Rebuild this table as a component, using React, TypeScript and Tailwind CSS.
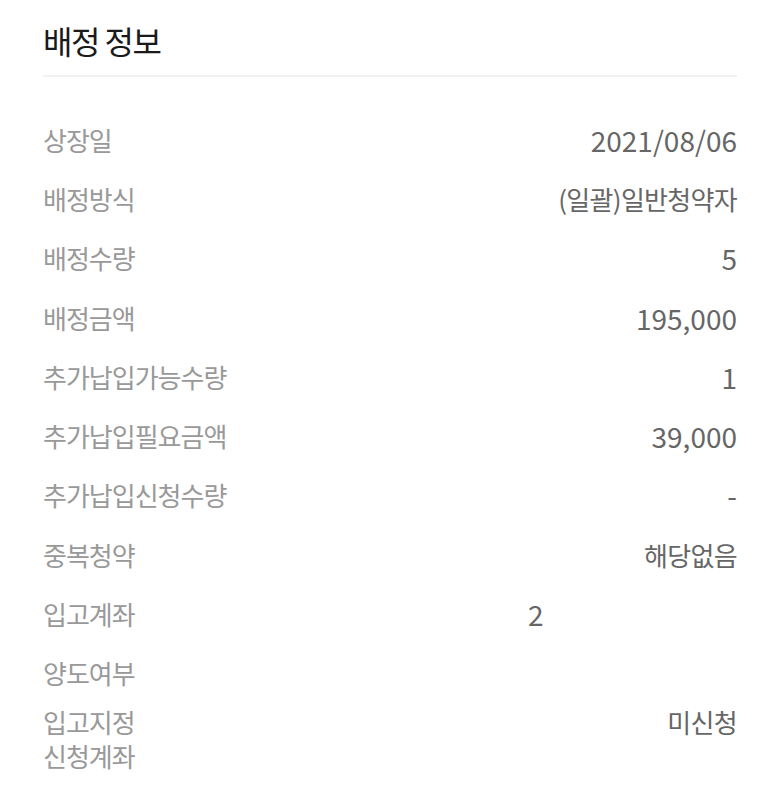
import React from "react";

const rows: { label: string; value: string; num?: boolean }[] = [
  { label: "상장일", value: "2021/08/06", num: true },
  { label: "배정방식", value: "(일괄)일반청약자" },
  { label: "배정수량", value: "5", num: true },
  { label: "배정금액", value: "195,000", num: true },
  { label: "추가납입가능수량", value: "1", num: true },
  { label: "추가납입필요금액", value: "39,000", num: true },
  { label: "추가납입신청수량", value: "-", num: true },
  { label: "중복청약", value: "해당없음" },
];

const L = "text-[26px] tracking-[-1px] text-[#999999]";
const VK = "text-[26px] tracking-[-0.7px] text-[#666666]";
const VN = "text-[28px] text-[#666666]";

export default function App() {
  return (
    <div
      className="w-[780px] h-[806px] bg-white px-[43px] pt-[20px]"
      style={{ fontFamily: '"Noto Sans CJK KR", "Noto Sans", sans-serif' }}
    >
      <h1 className="text-[32px] tracking-[-1.5px] leading-[40px] font-normal text-[#1a1a1a]">
        배정&nbsp;정보
      </h1>
      <div className="mt-[15px] h-[2px] bg-[#f2f2f2]" />
      <div className="mt-[33px]">
        {rows.map((r) => (
          <div key={r.label} className="flex h-[59.3px] items-center justify-between leading-[34px]">
            <span className={L}>{r.label}</span>
            <span className={r.num ? VN : VK}>{r.value}</span>
          </div>
        ))}
        <div className="flex h-[59.3px] items-center leading-[34px]">
          <span className={`w-[485px] ${L}`}>입고계좌</span>
          <span className={VN}>2</span>
        </div>
        <div className="flex h-[59.3px] items-center leading-[34px]">
          <span className={L}>양도여부</span>
        </div>
        <div className="flex items-start justify-between pt-[2px] leading-[34px]">
          <span className={L}>
            입고지정
            <br />
            신청계좌
          </span>
          <span className={VK}>미신청</span>
        </div>
      </div>
    </div>
  );
}
